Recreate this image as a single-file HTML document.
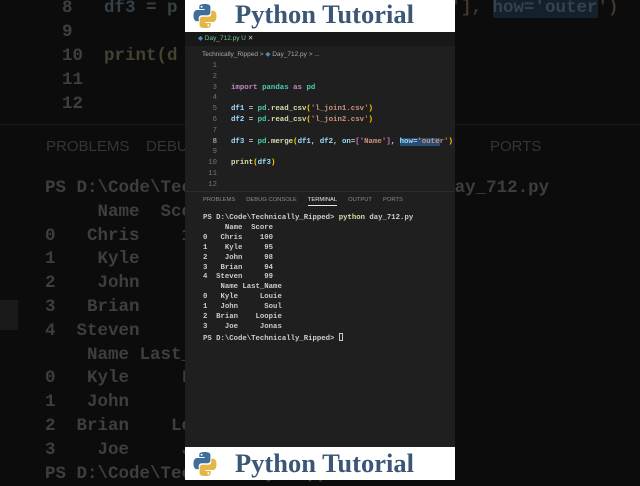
<!DOCTYPE html>
<html><head><meta charset="utf-8"><style>
*{margin:0;padding:0;box-sizing:border-box}
body{width:640px;height:480px;overflow:hidden;background:#0c0c0c;position:relative;font-family:"Liberation Mono",monospace}
.bg{position:absolute;white-space:pre;font-family:"Liberation Mono",monospace;font-size:17.5px;color:#3e3e3e;font-weight:bold;line-height:24px}
.panel{position:absolute;left:185px;top:0;width:270px;height:480px;background:#1f1f1f;overflow:hidden}
.banner{position:absolute;left:0;width:270px;height:32px;background:#fff}
.banner .t{position:absolute;left:50px;top:-1px;font-family:"Liberation Serif",serif;font-weight:bold;font-size:26.5px;color:#3b5676;white-space:nowrap}
.banner svg{position:absolute;left:7px;top:3px}
.code{position:absolute;white-space:pre;font-size:7.4px;line-height:10.8px;color:#d4d4d4;font-weight:bold}
.ln{position:absolute;left:18px;width:14px;text-align:right;font-size:7.3px;line-height:10.8px;color:#6e7681;white-space:pre}
.k{color:#c586c0}.m{color:#4ec9b0}.v{color:#9cdcfe}.s{color:#ce9178}.f{color:#dcdcaa}.b{color:#ffd700}.p{color:#da70d6}
.term{position:absolute;left:18px;top:214px;white-space:pre;font-size:7.3px;line-height:9.9px;color:#cccccc;font-weight:bold}
.tabs{position:absolute;top:197px;left:18px;font-family:"Liberation Sans",sans-serif;font-size:5.8px;color:#8b8b8b;white-space:nowrap}
.tabs span{margin-right:11px}
</style></head><body>
<div class="bg" style="left:62px;top:-4px">8   <span style="color:#34404a">df3</span> = <span style="color:#34453e">p</span>
9
10  <span style="color:#45422f">print(d</span>
11
12</div>
<div style="position:absolute;left:0;top:124px;width:640px;height:1px;background:#1c1c1c"></div>
<div class="bg" style="left:46px;top:135px;font-family:'Liberation Sans',sans-serif;font-weight:normal;font-size:15px;color:#353535">PROBLEMS    DEBU</div>
<div class="bg" style="left:490px;top:135px;font-family:'Liberation Sans',sans-serif;font-weight:normal;font-size:15px;color:#353535">PORTS</div>
<div class="bg" style="left:45px;top:177px;line-height:23.8px">PS D:\Code\Technically_Ripped> python day_712.py
     Name  Score
0   Chris    100
1    Kyle     95
2    John     98
3   Brian     94
4  Steven     99
    Name Last_Name
0   Kyle     Louie
1   John      Soul
2  Brian    Loopie
3    Joe     Jonas
PS D:\Code\Technically_Ripped></div>
<div class="bg" style="left:440px;top:-4px;color:#45352f">e'], <span style="background:#14202c;color:#35424f">how='outer</span>')</div>
<div style="position:absolute;left:0;top:300px;width:18px;height:30px;background:#1a1a1a"></div>

<div class="panel">
  <div class="banner" style="top:0">
    <svg width="26" height="26" viewBox="0 0 26 26"><path d="M12.5 1C7 1 7.3 3.4 7.3 3.4V6h5.4v1H5.2S1.5 6.6 1.5 12.5s3.2 5.7 3.2 5.7h2v-2.8s-.1-3.2 3.2-3.2h5.4s3.1 0 3.1-3V3.9S19 1 12.5 1zM9.6 2.7a1 1 0 110 2 1 1 0 010-2z" fill="#3d6f9a"/><path d="M13.5 25c5.5 0 5.2-2.4 5.2-2.4V20h-5.4v-1h7.5s3.7.4 3.7-5.5-3.2-5.7-3.2-5.7h-2v2.8s.1 3.2-3.2 3.2H10.7s-3.1 0-3.1 3v5.3S7 25 13.5 25zm2.9-1.7a1 1 0 110-2 1 1 0 010 2z" fill="#e3b842"/></svg>
    <div class="t">Python Tutorial</div>
  </div>
  <div style="position:absolute;top:32px;left:0;width:270px;height:14px;background:#181818"></div>
  <div style="position:absolute;top:34px;left:13px;font-family:'Liberation Sans',sans-serif;font-size:6.5px;color:#73c991;white-space:nowrap"><span style="color:#4b8bbe">◆</span> Day_712.py U <span style="color:#ccc">✕</span></div>
  <div style="position:absolute;top:50px;left:17px;font-family:'Liberation Sans',sans-serif;font-size:6.5px;color:#a9a9a9;white-space:nowrap">Technically_Ripped &gt; <span style="color:#4b8bbe">◆</span> Day_712.py &gt; ...</div>
  <div class="ln" style="top:61px">1
2
3
4
5
6
7
<span style="color:#ccc">8</span>
9
10
11
12</div>
  <div class="code" style="left:46px;top:61px">

<span class="k">import</span> <span class="m">pandas</span> <span class="k">as</span> <span class="m">pd</span>

<span class="v">df1</span> = <span class="m">pd</span>.<span class="f">read_csv</span><span class="b">(</span><span class="s">'l_join1.csv'</span><span class="b">)</span>
<span class="v">df2</span> = <span class="m">pd</span>.<span class="f">read_csv</span><span class="b">(</span><span class="s">'l_join2.csv'</span><span class="b">)</span>

<span class="v">df3</span> = <span class="m">pd</span>.<span class="f">merge</span><span class="b">(</span><span class="v">df1</span>, <span class="v">df2</span>, <span class="v">on</span>=<span class="p">[</span><span class="s">'Name'</span><span class="p">]</span>, <span style="background:#264f78"><span class="v">how</span>=<span class="s">'oute</span></span><span class="s">r'</span><span class="b">)</span>

<span class="f">print</span><span class="b">(</span><span class="v">df3</span><span class="b">)</span></div>
  <div style="position:absolute;top:191px;left:0;width:270px;height:1px;background:#2b2b2b"></div>
  <div class="tabs"><span>PROBLEMS</span><span>DEBUG CONSOLE</span><span style="color:#e7e7e7;border-bottom:1px solid #e7e7e7;padding-bottom:2px">TERMINAL</span><span>OUTPUT</span><span>PORTS</span></div>
  <div class="term">PS D:\Code\Technically_Ripped&gt; <span style="color:#dcdcaa">python</span> day_712.py
     Name  Score
0   Chris    100
1    Kyle     95
2    John     98
3   Brian     94
4  Steven     99
    Name Last_Name
0   Kyle     Louie
1   John      Soul
2  Brian    Loopie
3    Joe     Jonas
PS D:\Code\Technically_Ripped&gt; <span style="display:inline-block;width:4px;height:8px;border:1px solid #ccc;vertical-align:-1px"></span></div>
  <div class="banner" style="top:447px;height:33px">
    <svg width="26" height="26" viewBox="0 0 26 26" style="top:4px"><path d="M12.5 1C7 1 7.3 3.4 7.3 3.4V6h5.4v1H5.2S1.5 6.6 1.5 12.5s3.2 5.7 3.2 5.7h2v-2.8s-.1-3.2 3.2-3.2h5.4s3.1 0 3.1-3V3.9S19 1 12.5 1zM9.6 2.7a1 1 0 110 2 1 1 0 010-2z" fill="#3d6f9a"/><path d="M13.5 25c5.5 0 5.2-2.4 5.2-2.4V20h-5.4v-1h7.5s3.7.4 3.7-5.5-3.2-5.7-3.2-5.7h-2v2.8s.1 3.2-3.2 3.2H10.7s-3.1 0-3.1 3v5.3S7 25 13.5 25zm2.9-1.7a1 1 0 110-2 1 1 0 010 2z" fill="#e3b842"/></svg>
    <div class="t" style="top:1px">Python Tutorial</div>
  </div>
</div>
</body></html>
